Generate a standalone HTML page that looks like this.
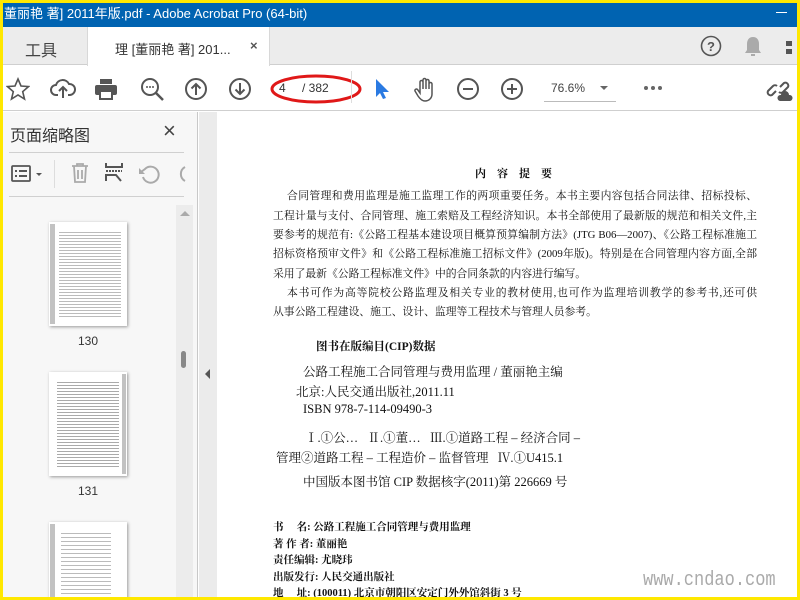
<!DOCTYPE html>
<html><head><meta charset="utf-8"><style>
*{margin:0;padding:0;box-sizing:border-box}
body{width:800px;height:600px;overflow:hidden;background:#ffe800;font-family:"Liberation Sans","Noto Sans CJK SC",sans-serif;position:relative}
.a{position:absolute}
.serif{font-family:"Liberation Serif","Noto Serif CJK SC",serif;color:#111}
.ln{position:absolute;font-size:10.8px;white-space:nowrap;text-align:justify;text-align-last:justify;font-family:"Liberation Serif","Noto Serif CJK SC",serif;color:#111}
svg{position:absolute}
</style></head><body>
<div class="a" style="left:3px;top:3px;width:794px;height:594px;background:#fff;overflow:hidden">
<!-- title -->
<div class="a" style="left:0;top:0;width:794px;height:24px;background:#0063b1;color:#fff;font-size:13px;line-height:22px;padding-left:1px;white-space:nowrap">董丽艳 著] 2011年版.pdf - Adobe Acrobat Pro (64-bit)</div>
<div class="a" style="left:773px;top:9px;width:11px;height:1px;background:#fff"></div>
<!-- tab bar -->
<div class="a" style="left:0;top:24px;width:794px;height:38px;background:#ececec;border-bottom:1px solid #cfcfcf"></div>
<div class="a" style="left:22px;top:34px;font-size:16px;color:#444">工具</div>
<div class="a" style="left:84px;top:24px;width:183px;height:39px;background:#fff;border-left:1px solid #d8d8d8;border-right:1px solid #d8d8d8"></div>
<div class="a" style="left:112px;top:36px;font-size:13px;color:#333;white-space:nowrap">理 [董丽艳 著] 201...</div>
<div class="a" style="left:247px;top:35px;font-size:13px;color:#555;font-weight:bold">×</div>
<svg style="left:697px;top:32px" width="22" height="22"><circle cx="11" cy="11" r="9.5" fill="none" stroke="#555" stroke-width="1.6"/><text x="11" y="16" font-size="13" font-weight="bold" text-anchor="middle" fill="#555" font-family="Liberation Sans">?</text></svg>
<svg style="left:740px;top:32px" width="20" height="22"><path d="M10 2c-4 0-6 3-6 7v6l-2 3h16l-2-3V9c0-4-2-7-6-7z" fill="#aaa"/><rect x="8" y="19" width="4" height="2" fill="#aaa"/></svg>
<div class="a" style="left:783px;top:38px;width:6px;height:5px;background:#555;box-shadow:0 8px 0 #555"></div>
<!-- toolbar -->
<div class="a" style="left:0;top:63px;width:794px;height:45px;background:#fff;border-bottom:1px solid #cfcfcf"></div>
<svg style="left:3px;top:74px" width="24" height="24"><path d="M12 2l3 7 7.5.6-5.8 5 1.8 7.4L12 18l-6.5 4 1.8-7.4-5.8-5L9 9z" fill="none" stroke="#555" stroke-width="1.6"/></svg>
<svg style="left:47px;top:74px" width="26" height="24"><path d="M8 18H6a5 5 0 0 1 0-10 7 7 0 0 1 13-1 5 5 0 0 1 1 11h-2" fill="none" stroke="#555" stroke-width="2"/><path d="M13 21V11M9 14l4-4 4 4" fill="none" stroke="#555" stroke-width="2"/></svg>
<svg style="left:91px;top:74px" width="24" height="24"><rect x="6" y="2" width="12" height="5" fill="#555"/><rect x="1" y="8" width="22" height="10" rx="2" fill="#555"/><rect x="6" y="14" width="12" height="8" fill="#fff" stroke="#555" stroke-width="2"/></svg>
<svg style="left:137px;top:74px" width="26" height="26"><circle cx="10" cy="10" r="8" fill="none" stroke="#555" stroke-width="2"/><path d="M16 16l7 7" stroke="#555" stroke-width="2.5"/><circle cx="7" cy="10" r="1" fill="#555"/><circle cx="10" cy="10" r="1" fill="#555"/><circle cx="13" cy="10" r="1" fill="#555"/></svg>
<svg style="left:181px;top:74px" width="24" height="24"><circle cx="12" cy="12" r="10" fill="none" stroke="#555" stroke-width="2"/><path d="M12 18V7M7.5 11.5L12 7l4.5 4.5" fill="none" stroke="#555" stroke-width="2"/></svg>
<svg style="left:225px;top:74px" width="24" height="24"><circle cx="12" cy="12" r="10" fill="none" stroke="#555" stroke-width="2"/><path d="M12 6v11M7.5 12.5L12 17l4.5-4.5" fill="none" stroke="#555" stroke-width="2"/></svg>
<div class="a" style="left:276px;top:78px;font-size:12px;color:#333">4</div>
<div class="a" style="left:299px;top:78px;font-size:12px;color:#333">/ 382</div>
<svg style="left:264px;top:68px" width="100" height="38"><ellipse cx="49" cy="18" rx="44" ry="13" fill="none" stroke="#e01818" stroke-width="3"/></svg>
<div class="a" style="left:348px;top:68px;width:1px;height:32px;background:#ddd"></div>
<svg style="left:370px;top:74px" width="16" height="24"><path d="M3 2v18l4-4 3 6 3-1-3-6h6z" fill="#2a7ae2"/></svg>
<svg style="left:410px;top:73px" width="26" height="28"><path d="M7 17V6a1.5 1.5 0 0 1 3 0v7V4a1.5 1.5 0 0 1 3 0v9V5a1.5 1.5 0 0 1 3 0v8V8a1.5 1.5 0 0 1 3 0v10c0 4-3 7-7 7-3 0-5-2-7-5l-3-5a1.5 1.5 0 0 1 2.5-1.5z" fill="none" stroke="#555" stroke-width="1.5"/></svg>
<svg style="left:453px;top:74px" width="24" height="24"><circle cx="12" cy="12" r="10" fill="none" stroke="#555" stroke-width="2"/><path d="M7 12h10" stroke="#555" stroke-width="2"/></svg>
<svg style="left:497px;top:74px" width="24" height="24"><circle cx="12" cy="12" r="10" fill="none" stroke="#555" stroke-width="2"/><path d="M7 12h10M12 7v10" stroke="#555" stroke-width="2"/></svg>
<div class="a" style="left:548px;top:78px;font-size:12px;color:#444">76.6%</div>
<div class="a" style="left:597px;top:83px;width:0;height:0;border-left:4px solid transparent;border-right:4px solid transparent;border-top:4px solid #666"></div>
<div class="a" style="left:541px;top:98px;width:72px;height:1px;background:#bbb"></div>
<div class="a" style="left:641px;top:83px;width:4px;height:4px;border-radius:2px;background:#666;box-shadow:7px 0 0 #666,14px 0 0 #666"></div>
<svg style="left:763px;top:74px" width="28" height="26"><path d="M10 14l-4 4a3 3 0 0 1-4-4l5-5a3 3 0 0 1 4 0M14 10l4-4a3 3 0 0 1 4 4l-5 5a3 3 0 0 1-4 0" fill="none" stroke="#555" stroke-width="2"/><path d="M14 24a3 3 0 0 1 1-6 4 4 0 0 1 8 0 3 3 0 0 1 1 6z" fill="#555"/></svg>
<!-- left panel -->
<div class="a" style="left:0;top:109px;width:195px;height:491px;background:#f7f7f7;border-right:1px solid #c8c8c8"></div>
<div class="a" style="left:7px;top:119px;font-size:16px;color:#333">页面缩略图</div>
<div class="a" style="left:160px;top:115px;font-size:22px;color:#444">×</div>
<div class="a" style="left:6px;top:149px;width:175px;height:1px;background:#d0d0d0"></div>
<svg style="left:7px;top:160px" width="40" height="24"><rect x="2" y="3" width="18" height="15" rx="1" fill="none" stroke="#555" stroke-width="1.8"/><path d="M5 8h2M5 13h2M9 8h8M9 13h8" stroke="#555" stroke-width="2"/><path d="M26 10l3 3 3-3z" fill="#555"/></svg>
<div class="a" style="left:51px;top:157px;width:1px;height:28px;background:#ddd"></div>
<svg style="left:66px;top:158px" width="22" height="24"><path d="M3 5h16M8 5V3h6v2M5 5l1 16h10l1-16M9 9v9M13 9v9" fill="none" stroke="#aaa" stroke-width="1.8"/></svg>
<svg style="left:101px;top:158px" width="22" height="24"><path d="M2 2v4h16V2M2 20v-6h10l5 6" fill="none" stroke="#555" stroke-width="2"/><path d="M2 10h16" stroke="#555" stroke-width="2" stroke-dasharray="2 1"/></svg>
<svg style="left:134px;top:160px" width="24" height="22"><path d="M6 14a8 8 0 1 0 2-8L4 9" fill="none" stroke="#aaa" stroke-width="2"/><path d="M2 5v6h6" fill="#aaa"/></svg>
<svg style="left:168px;top:160px" width="16" height="22"><path d="M14 4a8 8 0 0 0 0 14" fill="none" stroke="#aaa" stroke-width="2"/></svg>
<div class="a" style="left:6px;top:193px;width:175px;height:1px;background:#d0d0d0"></div>
<div class="a" style="left:173px;top:202px;width:17px;height:398px;background:#ececec"></div>
<div class="a" style="left:177px;top:208px;width:0;height:0;border-left:5px solid transparent;border-right:5px solid transparent;border-bottom:5px solid #aaa"></div>
<div class="a" style="left:178px;top:348px;width:5px;height:17px;border-radius:3px;background:#888"></div>
<!-- thumbnails -->
<div class="a" style="left:46px;top:219px;width:78px;height:104px;background:#fff;box-shadow:1px 1px 3px #999;overflow:hidden">
<div style="position:absolute;left:1px;top:2px;width:5px;height:100px;background:#999;opacity:.6"></div>
<div style="position:absolute;left:10px;top:8px;width:62px;height:88px;background:repeating-linear-gradient(#fff 0 2px,#bbb 2px 3px)"></div></div>
<div class="a" style="left:75px;top:331px;font-size:12px;color:#333">130</div>
<div class="a" style="left:46px;top:369px;width:78px;height:104px;background:#fff;box-shadow:1px 1px 3px #999;overflow:hidden">
<div style="position:absolute;right:1px;top:2px;width:4px;height:100px;background:#999;opacity:.6"></div>
<div style="position:absolute;left:8px;top:8px;width:62px;height:88px;background:repeating-linear-gradient(#fff 0 2px,#aaa 2px 3px)"></div></div>
<div class="a" style="left:75px;top:481px;font-size:12px;color:#333">131</div>
<div class="a" style="left:46px;top:519px;width:78px;height:81px;background:#fff;box-shadow:1px 1px 3px #999;overflow:hidden">
<div style="position:absolute;left:1px;top:2px;width:5px;height:80px;background:#999;opacity:.6"></div>
<div style="position:absolute;left:12px;top:8px;width:50px;height:75px;background:repeating-linear-gradient(#fff 0 3px,#bbb 3px 4px)"></div></div>
<!-- splitter -->
<div class="a" style="left:196px;top:109px;width:18px;height:491px;background:#ebebeb"></div>
<div class="a" style="left:202px;top:366px;width:0;height:0;border-top:5px solid transparent;border-bottom:5px solid transparent;border-right:5px solid #555"></div>
<!-- page -->
<div class="a" style="left:214px;top:109px;width:580px;height:491px;background:#fff"></div>
<div class="a serif" style="left:472px;top:162px;font-size:11px;font-weight:bold;letter-spacing:11px">内容提要</div>
<div class="ln" style="left:284px;top:185px;width:470px">合同管理和费用监理是施工监理工作的两项重要任务。本书主要内容包括合同法律、招标投标、</div>
<div class="ln" style="left:270px;top:205px;width:484px">工程计量与支付、合同管理、施工索赔及工程经济知识。本书全部使用了最新版的规范和相关文件,主</div>
<div class="ln" style="left:270px;top:224px;width:484px">要参考的规范有:《公路工程基本建设项目概算预算编制方法》(JTG B06—2007)、《公路工程标准施工</div>
<div class="ln" style="left:270px;top:243px;width:484px">招标资格预审文件》和《公路工程标准施工招标文件》(2009年版)。特别是在合同管理内容方面,全部</div>
<div class="ln" style="left:270px;top:263px;width:auto;text-align-last:auto">采用了最新《公路工程标准文件》中的合同条款的内容进行编写。</div>
<div class="ln" style="left:284px;top:282px;width:470px">本书可作为高等院校公路监理及相关专业的教材使用,也可作为监理培训教学的参考书,还可供</div>
<div class="ln" style="left:270px;top:301px;width:auto;text-align-last:auto">从事公路工程建设、施工、设计、监理等工程技术与管理人员参考。</div>
<div class="a serif" style="left:313px;top:335px;font-size:11.5px;font-weight:bold">图书在版编目(CIP)数据</div>
<div class="a serif" style="left:300px;top:359px;font-size:12.5px;white-space:nowrap">公路工程施工合同管理与费用监理 / 董丽艳主编</div>
<div class="a serif" style="left:293px;top:379px;font-size:12.5px;white-space:nowrap">北京:人民交通出版社,2011.11</div>
<div class="a serif" style="left:300px;top:399px;font-size:12.5px;white-space:nowrap">ISBN 978-7-114-09490-3</div>
<div class="a serif" style="left:302px;top:425px;font-size:12.5px;white-space:nowrap">Ⅰ.①公…&nbsp;&nbsp; Ⅱ.①董…&nbsp;&nbsp; Ⅲ.①道路工程 – 经济合同 –</div>
<div class="a serif" style="left:273px;top:445px;font-size:12.5px;white-space:nowrap">管理②道路工程 – 工程造价 – 监督管理&nbsp;&nbsp; Ⅳ.①U415.1</div>
<div class="a serif" style="left:300px;top:469px;font-size:12.5px;white-space:nowrap">中国版本图书馆 CIP 数据核字(2011)第 226669 号</div>
<div class="a serif" style="left:270px;top:517px;font-size:10.5px;line-height:16.5px;font-weight:bold;white-space:nowrap">书&nbsp;&nbsp;&nbsp;&nbsp;&nbsp;名: 公路工程施工合同管理与费用监理<br>著 作 者: 董丽艳<br>责任编辑: 尤晓玮<br>出版发行: 人民交通出版社<br>地&nbsp;&nbsp;&nbsp;&nbsp;&nbsp;址: (100011) 北京市朝阳区安定门外外馆斜街 3 号</div>
<div class="a" style="left:640px;top:566px;font-size:20px;color:#aaa;font-family:'Liberation Mono',monospace;transform:scaleX(.85);transform-origin:left">www.cndao.com</div>
</div>
</body></html>
